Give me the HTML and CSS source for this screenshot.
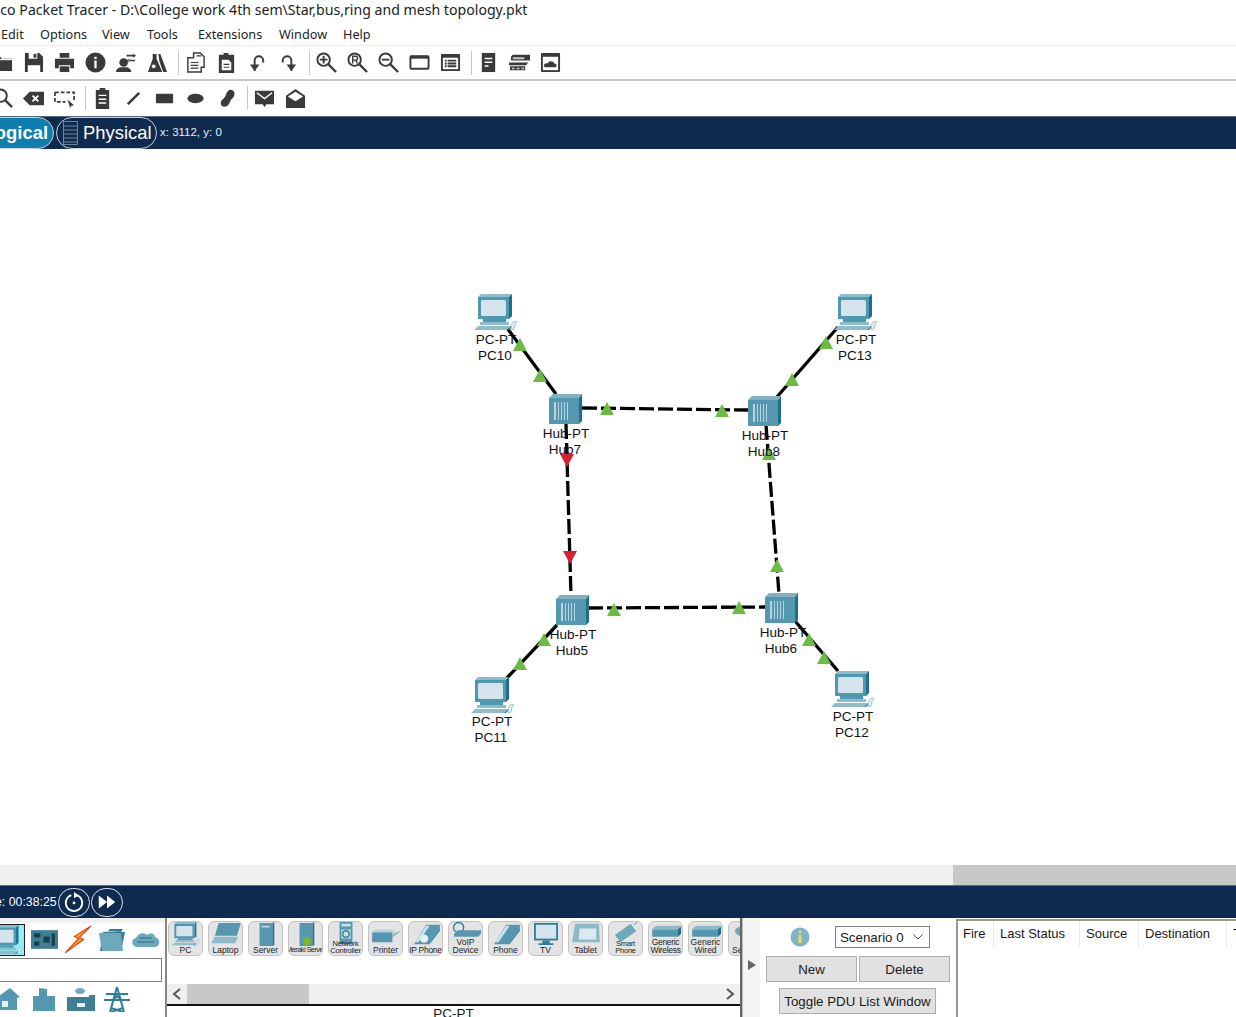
FILE: index.html
```html
<!DOCTYPE html>
<html lang="en">
<head>
<meta charset="utf-8">
<title>Cisco Packet Tracer</title>
<link rel="stylesheet" href="styles.css">
</head>
<body>
<svg class="defs" width="0" height="0" aria-hidden="true">
  <defs>
    <symbol id="pc" viewBox="0 0 44 37">
      <path d="M4 3l3-3h31l-3 3z" fill="#8dbccb"/>
      <path d="M35 3l3-3v22l-3 3z" fill="#1f6f8c"/>
      <rect x="4" y="3" width="31" height="22" fill="#4f98b1"/>
      <rect x="7" y="6" width="25" height="16" rx="1.500" fill="#d5e4ec"/>
      <path d="M9 25h23v3H9z" fill="#4f98b1"/>
      <path d="M6 28h29v3H6z" fill="#8dbccb"/>
      <path d="M4 32h33l-4 4H0z" fill="#8dbccb"/>
      <path d="M33 36l4-4v2l-2 2z" fill="#2f7f99"/>
      <path d="M38 29c2-2 4-2 5-1l-2 2-1 5-3 1z" fill="#e6eff3" stroke="#7fb4c6" stroke-width=".7"/>
    </symbol>
    <symbol id="hub" viewBox="0 0 33 31">
      <path d="M0 4l4-4h29l-3 4z" fill="#80b0c2"/>
      <path d="M30 4l3-4v27l-3 3z" fill="#1f6f8c"/>
      <rect x="0" y="4" width="30" height="26" fill="#5597af"/>
      <path d="M5 8h2v18H5zM9 8h1v18H9zM12 8h1v18h-1zM15 8h1v18h-1zM18 8h1v18h-1z" fill="#b7d3de"/>
    </symbol>
    <symbol id="tri-up" viewBox="0 0 14 13"><path d="M7 0l7 13H0z" fill="#6cbb45"/></symbol>
    <symbol id="tri-down" viewBox="0 0 14 13"><path d="M0 0h14L7 13z" fill="#d9202f"/></symbol>
  </defs>
</svg>

<header class="title-bar"><span class="title-text">Cisco Packet Tracer - D:\College work 4th sem\Star,bus,ring and mesh topology.pkt</span></header>

<nav class="menu-bar">
  <span class="menu-item menu-edit">Edit</span>
  <span class="menu-item menu-options">Options</span>
  <span class="menu-item menu-view">View</span>
  <span class="menu-item menu-tools">Tools</span>
  <span class="menu-item menu-ext">Extensions</span>
  <span class="menu-item menu-window">Window</span>
  <span class="menu-item menu-help">Help</span>
</nav>

<div class="toolbar toolbar-main">
  <span class="tool"><svg viewBox="0 0 22 22"><path d="M0 4h8l2 3h11v13H0z"/><path d="M0 8h21" stroke="#fff" stroke-width="1.2"/></svg></span>
  <span class="tool"><svg viewBox="0 0 22 22"><path d="M2 1h15l4 4v16H2z"/><path d="M6 1h9v6H6zM5 14h13v7H5z" fill="#fff"/><path d="M11 2h3v4h-3z"/></svg></span>
  <span class="tool"><svg viewBox="0 0 22 22"><path d="M6 1h10v5H6zM1 7h20v10h-4v-3H5v3H1z"/><path d="M6 15h10v6H6z"/></svg></span>
  <span class="tool"><svg viewBox="0 0 22 22"><circle cx="11" cy="11" r="10.5"/><path d="M9.8 5h2.4v2.4H9.800zM9.800 9h2.400v8H9.800z" fill="#fff"/></svg></span>
  <span class="tool"><svg viewBox="0 0 22 22"><circle cx="8" cy="11" r="4.500"/><path d="M0 21c0-3 3-5 6-5h4c3 0 6 2 6 5zM11 3h7v1.600h-7zM18 1.500l3 2.300-3 2.300zM13 8h7v1.600h-7zM14 6.500l-3 2.300 3 2.300z"/></svg></span>
  <span class="tool"><svg viewBox="0 0 22 22"><path d="M6 2h4v5l6 14H1L6 7zM12 2h2l7 19h-4l-4-11z"/><circle cx="7" cy="15" r="2" fill="#fff"/></svg></span>
  <span class="tool-sep"></span>
  <span class="tool"><svg viewBox="0 0 22 22"><path d="M9 1h7l4 4v11h-3v5H3V6h6z" fill="#fff" stroke="#3a3a3a" stroke-width="1.500"/><path d="M6 11h8M6 14h8M6 17h8M12 4h5" stroke="#3a3a3a" stroke-width="1.300"/></svg></span>
  <span class="tool"><svg viewBox="0 0 22 22"><path d="M3 3h5V1h5v2h6v19H3z"/><path d="M6 8h7l3 3v8H6z" fill="#fff"/><path d="M8 13h6M8 16h6" stroke="#3a3a3a" stroke-width="1.200"/></svg></span>
  <span class="tool"><svg viewBox="0 0 22 22"><path d="M8 20v-11c0-6 9-6 9 0v2" fill="none" stroke="#3a3a3a" stroke-width="2"/><path d="M3 11h10l-5 7z" transform="translate(0 2)"/></svg></span>
  <span class="tool"><svg viewBox="0 0 22 22"><path d="M14 20v-11c0-6-9-6-9 0v2" fill="none" stroke="#3a3a3a" stroke-width="2"/><path d="M9 13h10l-5 7z"/></svg></span>
  <span class="tool-sep"></span>
  <span class="tool"><svg viewBox="0 0 22 22"><circle cx="8" cy="8" r="6.500" fill="none" stroke="#3a3a3a" stroke-width="2"/><path d="M13 13l8 8" stroke="#3a3a3a" stroke-width="2.400"/><path d="M4 8h8M8 4v8" stroke="#3a3a3a" stroke-width="2"/></svg></span>
  <span class="tool"><svg viewBox="0 0 22 22"><circle cx="8" cy="8" r="6.500" fill="none" stroke="#3a3a3a" stroke-width="2"/><path d="M13 13l8 8" stroke="#3a3a3a" stroke-width="2.400"/><path d="M6 12V4.500h3a2 2 0 0 1 0 4H6M9 8.500l2 3.500" fill="none" stroke="#3a3a3a" stroke-width="1.500"/></svg></span>
  <span class="tool"><svg viewBox="0 0 22 22"><circle cx="8" cy="8" r="6.500" fill="none" stroke="#3a3a3a" stroke-width="2"/><path d="M13 13l8 8" stroke="#3a3a3a" stroke-width="2.400"/><path d="M4 8h8" stroke="#3a3a3a" stroke-width="2"/></svg></span>
  <span class="tool"><svg viewBox="0 0 22 22"><rect x="1.500" y="4.500" width="19" height="13" rx="1" fill="none" stroke="#3a3a3a" stroke-width="2"/><path d="M1 4h20v3H1z"/></svg></span>
  <span class="tool"><svg viewBox="0 0 22 22"><rect x="1" y="2" width="20" height="18" rx="1"/><path d="M3 6h16v12H3z" fill="#fff"/><path d="M5 8h2v2H5zM8 8h9v2H8zM5 11h2v2H5zM8 11h9v2H8zM5 14h2v2H5zM8 14h9v2H8z"/></svg></span>
  <span class="tool-sep"></span>
  <span class="tool"><svg viewBox="0 0 22 22"><path d="M4 1h14v20H4z"/><path d="M7 6h8v1.500H7zM7 10h8v1.500H7zM7 14h4v1.500H7z" fill="#fff"/></svg></span>
  <span class="tool"><svg viewBox="0 0 22 22"><path d="M2 5l2-2h18v6H2zM0 11h20l-2 3H0zM1 15h16v4H1z"/><path d="M4 5.500h12v2H4zM3 16.500h3v1.500H3zM8 16.500h3v1.500H8zM13 16.500h3v1.500h-3z" fill="#c9c9c9"/></svg></span>
  <span class="tool"><svg viewBox="0 0 22 22"><rect x="1" y="1" width="20" height="20" rx="1"/><path d="M3 5h16v14H3z" fill="#fff"/><path d="M5 16c-2-2 0-5 3-4 1-3 6-3 7 0 3 0 3 4 1 4z"/></svg></span>
</div>

<div class="toolbar toolbar-draw">
  <span class="tool"><svg viewBox="0 0 22 22"><circle cx="9" cy="8" r="6.500" fill="none" stroke="#3a3a3a" stroke-width="2"/><path d="M14 13l7 7" stroke="#3a3a3a" stroke-width="2.400"/></svg></span>
  <span class="tool"><svg viewBox="0 0 22 22"><path d="M7 4h15v14H7L0 11z"/><path d="M10 8l6 6M16 8l-6 6" stroke="#fff" stroke-width="2"/></svg></span>
  <span class="tool"><svg viewBox="0 0 22 22"><path d="M1 4.500h20v8M1 4.500v10h11" fill="none" stroke="#3a3a3a" stroke-width="1.800" stroke-dasharray="4 2"/><path d="M14 12l7 6-3 .5-1 2.500z"/></svg></span>
  <span class="tool-sep"></span>
  <span class="tool"><svg viewBox="0 0 22 22"><path d="M4 2h4V0h6v2h4v20H4z"/><path d="M7 7h8v1.500H7zM7 11h8v1.500H7zM7 15h8v1.500H7z" fill="#fff"/></svg></span>
  <span class="tool"><svg viewBox="0 0 22 22"><path d="M5 17L17 5" stroke="#3a3a3a" stroke-width="2.600"/></svg></span>
  <span class="tool"><svg viewBox="0 0 22 22"><rect x="2" y="6" width="18" height="10" rx="1"/></svg></span>
  <span class="tool"><svg viewBox="0 0 22 22"><ellipse cx="11" cy="11" rx="8.500" ry="5"/></svg></span>
  <span class="tool"><svg viewBox="0 0 22 22"><path d="M14 2c5-1 7 4 4 8-2 2-3 3-4 6-2 5-9 5-9 0 0-4 4-5 5-8 1-3 2-5 4-6z"/></svg></span>
  <span class="tool-sep"></span>
  <span class="tool"><svg viewBox="0 0 22 22"><path d="M1 3h20v14h-8l-2 3-2-3H1z"/><path d="M3 5l8 6 8-6" fill="none" stroke="#fff" stroke-width="1.500"/></svg></span>
  <span class="tool"><svg viewBox="0 0 22 22"><path d="M1 8l10-7 10 7v13H1z"/><path d="M3 9l8 5 8-5-8-5z" fill="#fff"/></svg></span>
</div>

<div class="mode-bar">
  <span class="mode-tab mode-logical">Logical</span>
  <span class="mode-tab mode-physical">
    <svg class="mode-icon" viewBox="0 0 15 24"><path d="M.5.500h14v23H.5zM.5 5h14M.5 9h14M.5 13h14M.5 17h14M.5 21h14" fill="none" stroke="#6f8499"/></svg>
    Physical
  </span>
  <span class="coords">x: 3112, y: 0</span>
</div>

<main class="canvas">
  <svg class="diagram" viewBox="0 149 1236 716" width="1236" height="716">
    <g class="link">
      <path d="M507 328L556 394"/>
      <path d="M776 398L838 327"/>
      <path d="M557 625L505 680"/>
      <path d="M795 621L838 671"/>
    </g>
    <g class="link link-dashed">
      <path d="M582 408L748 410"/>
      <path d="M566 424L571 596"/>
      <path d="M766 425L779 594"/>
      <path d="M588 608L765 607"/>
    </g>
    <use href="#pc" x="474" y="294" width="44" height="37"/>
    <use href="#pc" x="834" y="294" width="44" height="37"/>
    <use href="#pc" x="471" y="677" width="44" height="37"/>
    <use href="#pc" x="831" y="671" width="44" height="37"/>
    <use href="#hub" x="549" y="394" width="33" height="31"/>
    <use href="#hub" x="748" y="396" width="33" height="31"/>
    <use href="#hub" x="556" y="595" width="33" height="31"/>
    <use href="#hub" x="765" y="593" width="33" height="31"/>
    <use href="#tri-up" x="513" y="338" width="14" height="13"/>
    <use href="#tri-up" x="533" y="369" width="14" height="13"/>
    <use href="#tri-up" x="600" y="402" width="14" height="13"/>
    <use href="#tri-up" x="715" y="404" width="14" height="13"/>
    <use href="#tri-up" x="785" y="373" width="14" height="13"/>
    <use href="#tri-up" x="819" y="336" width="14" height="13"/>
    <use href="#tri-up" x="762" y="447" width="14" height="13"/>
    <use href="#tri-up" x="770" y="559" width="14" height="13"/>
    <use href="#tri-up" x="607" y="603" width="14" height="13"/>
    <use href="#tri-up" x="732" y="601" width="14" height="13"/>
    <use href="#tri-up" x="537" y="633" width="14" height="13"/>
    <use href="#tri-up" x="513" y="657" width="14" height="13"/>
    <use href="#tri-up" x="802" y="633" width="14" height="13"/>
    <use href="#tri-up" x="817" y="651" width="14" height="13"/>
    <use href="#tri-down" x="560" y="454" width="14" height="13"/>
    <use href="#tri-down" x="563" y="551" width="14" height="13"/>
    <g class="node-label">
      <text x="496" y="344">PC-PT</text><text x="495" y="360">PC10</text>
      <text x="856" y="344">PC-PT</text><text x="855" y="360">PC13</text>
      <text x="492" y="726">PC-PT</text><text x="491" y="742">PC11</text>
      <text x="853" y="721">PC-PT</text><text x="852" y="737">PC12</text>
      <text x="566" y="438">Hub-PT</text><text x="565" y="454">Hub7</text>
      <text x="765" y="440">Hub-PT</text><text x="764" y="456">Hub8</text>
      <text x="573" y="639">Hub-PT</text><text x="572" y="655">Hub5</text>
      <text x="783" y="637">Hub-PT</text><text x="781" y="653">Hub6</text>
    </g>
  </svg>
</main>

<div class="h-scroll"><span class="h-thumb"></span></div>

<div class="sim-bar">
  <span class="sim-time">Time: 00:38:25</span>
  <span class="round-btn"><svg viewBox="0 0 24 24"><path d="M9 4.500a9 9 0 1 0 6 0" fill="none" stroke="#fff" stroke-width="2"/><path d="M12 1l5 4-5 3z" fill="#fff"/><circle cx="12" cy="13" r="1.500" fill="#fff"/></svg></span>
  <span class="round-btn"><svg viewBox="0 0 24 24"><path d="M3 5l9 7-9 7zM12 5l9 7-9 7z" fill="#fff"/></svg></span>
</div>

<section class="bottom">
  <div class="cat-panel">
    <div class="cat-row">
      <span class="cat-selected"><svg viewBox="0 0 44 37"><use href="#pc"/></svg></span>
      <svg class="cat-board" viewBox="0 0 26 18"><rect width="26" height="18" fill="#3f7f95"/><path d="M3 3h6v4H3zM12 6h6v6h-6zM20 3h3v12h-3zM3 11h5v4H3z" fill="#173f4f"/></svg>
      <svg class="cat-bolt" viewBox="0 0 26 26"><path d="M25 0L9 10l4 2L0 26l18-13-4-2z" fill="#f6a11a" stroke="#e23b1d" stroke-width="1"/></svg>
      <svg class="cat-folder" viewBox="0 0 27 22"><path d="M1 2h8l2-2h13l-2 3H4l-3 19h21l4-19" fill="#2f7f99"/><path d="M0 4h22l2 18H3z" fill="#6ea8bb"/></svg>
      <svg class="cat-cloud" viewBox="0 0 28 18"><path d="M4 16C-1 14-1 8 4 7c2-5 8-6 11-3 4-3 8-1 8 2 5 1 6 8 1 10z" fill="#6ea8bb"/><path d="M7 7h13M5 11h17" stroke="#3f7f95" stroke-width="1.500"/></svg>
    </div>
    <div class="cat-search"></div>
    <div class="cat-row cat-row-lower">
      <svg class="sub-home" viewBox="0 0 25 23"><path d="M0 10L14 0l10 9-3 1v12H0z" fill="#5597af"/><path d="M6 13h6v6H6z" fill="#e6f0f4"/></svg>
      <svg class="sub-building" viewBox="0 0 22 23"><path d="M6 0l8 1v22H6zM0 8h6v15H0zM14 8h8v15h-8z" fill="#5597af"/></svg>
      <svg class="sub-corp" viewBox="0 0 28 23"><ellipse cx="13" cy="3" rx="5" ry="3" fill="#6ea8bb"/><path d="M0 9h22V7h6v16H0z" fill="#3f7f95"/><path d="M10 15h8v4h-8z" fill="#e6f0f4"/></svg>
      <svg class="sub-tower" viewBox="0 0 26 26"><path d="M13 1l7 25M13 1L6 26M2 8h22M0 14h26M9 8l9 6M17 8l-9 6M7 22l12 4M19 22L7 26" fill="none" stroke="#2f7f99" stroke-width="2"/></svg>
    </div>
  </div>

  <div class="dev-panel">
    <div class="dev-tiles">
      <div class="tile"><svg viewBox="0 0 32 26"><use href="#pc" width="32" height="26"/></svg><span class="tile-label">PC</span></div>
      <div class="tile"><svg viewBox="0 0 32 26"><path d="M8 1h24l-4 14H4z" fill="#5597af"/><path d="M4 16h25l-3 7H0z" fill="#8db9c8"/></svg><span class="tile-label">Laptop</span></div>
      <div class="tile"><svg viewBox="0 0 32 26"><path d="M9 1h14v25H9z" fill="#5597af"/><path d="M23 1l2-1v25l-2 1z" fill="#1f6f8c"/><path d="M11 4h9v2h-9z" fill="#b7d3de"/></svg><span class="tile-label">Server</span></div>
      <div class="tile"><svg viewBox="0 0 32 26"><path d="M9 1h14v25H9z" fill="#5597af"/><path d="M23 1l2-1v25l-2 1z" fill="#1f6f8c"/><circle cx="17" cy="21" r="4.500" fill="#77b82e"/></svg><span class="tile-label tile-tiny">Meraki Server</span></div>
      <div class="tile"><svg viewBox="0 0 32 26"><path d="M9 0h14v24H9z" fill="#5597af"/><path d="M11 2h10v3H11zM11 8h10v10H11z" fill="#c9dfe8"/><circle cx="16" cy="13" r="3.500" fill="none" stroke="#2f7f99" stroke-width="1.500"/></svg><span class="tile-label tile-small">Network<br>Controller</span></div>
      <div class="tile"><svg viewBox="0 0 32 26"><path d="M1 11h22v11H1z" fill="#5597af"/><path d="M4 8h19l3 3H1z" fill="#b7d3de"/><path d="M23 13l10-4-10 8z" fill="#8db9c8"/></svg><span class="tile-label">Printer</span></div>
      <div class="tile"><svg viewBox="0 0 32 26"><path d="M3 24L16 3h15v7L20 24z" fill="#5597af"/><path d="M4 22L16 4h4L8 22z" fill="#c9dfe8"/><circle cx="14" cy="18" r="4.500" fill="#e6f0f4"/></svg><span class="tile-label tile-tight">IP Phone</span></div>
      <div class="tile"><svg viewBox="0 0 32 26"><circle cx="8" cy="6" r="5.500" fill="none" stroke="#2f7f99" stroke-width="1.500"/><path d="M3 13L7 9h26v3l-4 4H3z" fill="#5597af"/></svg><span class="tile-label">VoIP<br>Device</span></div>
      <div class="tile"><svg viewBox="0 0 32 26"><path d="M3 24L16 3h15v7L20 24z" fill="#5597af"/><path d="M4 22L16 4h4L8 22z" fill="#c9dfe8"/></svg><span class="tile-label">Phone</span></div>
      <div class="tile"><svg viewBox="0 0 32 26"><rect x="3" y="1" width="26" height="19" fill="#2f7f99"/><rect x="5" y="3" width="22" height="15" fill="#d5e4ec"/><path d="M12 20h8v3h4v2H8v-2h4z" fill="#2f7f99"/></svg><span class="tile-label">TV</span></div>
      <div class="tile"><svg viewBox="0 0 32 26"><path d="M4 2h26l1 20H1z" fill="#8db9c8"/><path d="M9 7h18v12H8z" fill="#dceaf0"/></svg><span class="tile-label">Tablet</span></div>
      <div class="tile"><svg viewBox="0 0 32 26"><path d="M4 14L21 2l6 8-17 12z" fill="#6ea8bb"/><path d="M25 3l3-3" stroke="#5597af"/></svg><span class="tile-label tile-small">Smart<br>Phone</span></div>
      <div class="tile"><svg viewBox="0 0 32 26"><path d="M1 8l4-4h28l-4 4z" fill="#8db9c8"/><path d="M1 8h28v8H1z" fill="#5597af"/><path d="M29 8l4-4v8l-4 4z" fill="#1f6f8c"/></svg><span class="tile-label tile-tight">Generic<br>Wireless</span></div>
      <div class="tile"><svg viewBox="0 0 32 26"><path d="M1 8l4-4h28l-4 4z" fill="#8db9c8"/><path d="M1 8h28v8H1z" fill="#5597af"/><path d="M29 8l4-4v8l-4 4z" fill="#1f6f8c"/></svg><span class="tile-label">Generic<br>Wired</span></div>
      <div class="tile"><svg viewBox="0 0 32 26"><ellipse cx="16" cy="10" rx="12" ry="6" fill="#6ea8bb"/></svg><span class="tile-label">Sensor</span></div>
    </div>
    <div class="dev-scroll">
      <svg class="dev-arrow" viewBox="0 0 10 12"><path d="M8 1L2 6l6 5" fill="none" stroke="#555" stroke-width="2"/></svg>
      <span class="dev-thumb"></span>
      <svg class="dev-arrow dev-arrow-right" viewBox="0 0 10 12"><path d="M2 1l6 5-6 5" fill="none" stroke="#555" stroke-width="2"/></svg>
    </div>
    <div class="dev-name">PC-PT</div>
  </div>

  <div class="splitter"><svg class="split-arrow" viewBox="0 0 8 10"><path d="M0 0l8 5-8 5z" fill="#666"/></svg></div>

  <div class="scenario">
    <div class="sc-top">
      <svg class="sc-info" viewBox="0 0 20 20"><circle cx="10" cy="10" r="9.500" fill="#7fb2c6"/><path d="M8.500 4h3v2.500h-3zM8.500 8h3v8h-3z" fill="#e8e04a"/></svg>
      <span class="sc-select">Scenario 0<svg class="sc-caret" viewBox="0 0 10 6"><path d="M.5.500L5 5 9.500.500" fill="none" stroke="#555"/></svg></span>
    </div>
    <div class="sc-buttons">
      <span class="btn">New</span>
      <span class="btn">Delete</span>
    </div>
    <span class="btn btn-toggle">Toggle PDU List Window</span>
  </div>

  <div class="pdu-table">
    <span class="pdu-head pdu-fire">Fire</span>
    <span class="pdu-head pdu-status">Last Status</span>
    <span class="pdu-head pdu-source">Source</span>
    <span class="pdu-head pdu-dest">Destination</span>
    <span class="pdu-head pdu-type">Type</span>
  </div>
</section>
</body>
</html>
```
FILE: styles.css
```css
* { box-sizing: border-box; }
html, body { margin: 0; height: 1017px; overflow: hidden; background: #fff; }
body { width: 1236px; font-family: "Liberation Sans", Arial, sans-serif; color: #1a1a1a; }
.defs { display: block; height: 0; }

.title-bar { height: 20px; overflow: hidden; font-family: "Noto Sans", sans-serif; font-size: 14.130px; line-height: 20px; white-space: nowrap; color: #222; }
.title-text { display: block; margin-left: -19px; }

.menu-bar { height: 26px; display: flex; align-items: center; font-family: "Noto Sans", sans-serif; font-size: 12.700px; border-bottom: 1px solid #eee; padding-top: 3px; color: #222; }
.menu-item { flex: none; }
.menu-edit { margin-left: 1px; width: 39px; }
.menu-options { width: 62px; }
.menu-view { width: 45px; }
.menu-tools { width: 51px; }
.menu-ext { width: 81px; }
.menu-window { width: 64px; }

.toolbar { height: 35px; display: flex; align-items: center; margin-left: -13px; width: 1249px; }
.toolbar-main { border-bottom: 2px solid #c8c8c8; }
.toolbar-draw { height: 35px; padding-bottom: 1px; }
.tool { flex: none; width: 31px; height: 24px; display: flex; align-items: center; justify-content: center; }
.tool svg { width: 21px; height: 21px; fill: #3a3a3a; }
.tool-sep { flex: none; width: 7px; height: 24px; position: relative; }
.tool-sep::after { content: ""; position: absolute; left: 5px; top: 0; bottom: 0; width: 1px; background: #c8c8c8; }

.mode-bar { height: 33px; background: #0e2a4f; border-top: 1px solid #5a6a7c; display: flex; align-items: center; margin-left: -16px; width: 1252px; color: #fff; }
.mode-tab { height: 32px; border-radius: 16px; border: 1px solid #c4d0da; display: flex; align-items: center; font-size: 18.400px; flex: none; }
.mode-logical { width: 70px; background: #0e7eae; font-weight: 700; justify-content: flex-end; padding-right: 5px; overflow: hidden; }
.mode-physical { width: 101px; margin-left: 2px; background: #0e2a4f; padding-left: 6px; gap: 5px; }
.mode-icon { width: 15px; height: 24px; flex: none; }
.coords { font-size: 11.500px; margin-left: 3px; padding-bottom: 2px; color: #e8eef4; }

.canvas { height: 716px; background: #fff; }
.diagram { display: block; }
.link path { fill: none; stroke: #000; stroke-width: 3.300; }
.link-dashed path { stroke-dasharray: 15 4; }
.node-label text { font-size: 13.500px; text-anchor: middle; fill: #111; }

.h-scroll { height: 20px; background: #f0f0f0; display: flex; justify-content: flex-end; }
.h-thumb { width: 283px; background: #c8c8c8; }

.sim-bar { height: 33px; background: #0e2a4f; border-top: 1px solid #5a6a7c; display: flex; align-items: center; margin-left: -25px; width: 1261px; color: #fff; }
.sim-time { font-size: 12.300px; width: 83px; flex: none; white-space: nowrap; }
.round-btn { width: 32px; height: 29px; margin-right: 1px; border: 1px solid #dfe6ec; border-radius: 15px; display: flex; align-items: center; justify-content: center; flex: none; }
.round-btn svg { width: 22px; height: 22px; }

.bottom { height: 99px; display: flex; overflow: hidden; }

.cat-panel { flex: none; width: 165px; position: relative; overflow: hidden; border-top: 5px solid #f0f0f0; }
.cat-row { display: flex; align-items: center; height: 33px; }
.cat-selected { flex: none; width: 39px; height: 32px; margin-left: -14px; background: #8ff0f5; border: 1px solid #222; display: flex; justify-content: flex-end; align-items: center; }
.cat-selected svg { width: 38px; height: 30px; }
.cat-board { width: 27px; height: 19px; margin-left: 6px; flex: none; }
.cat-bolt { width: 27px; height: 27px; margin-left: 7px; flex: none; }
.cat-folder { width: 27px; height: 22px; margin-left: 7px; flex: none; }
.cat-cloud { width: 28px; height: 18px; margin-left: 6px; flex: none; }
.cat-search { height: 24px; width: 170px; margin: 2px 0 0 -8px; border: 1px solid #808080; }
.cat-row-lower { height: 30px; padding-top: 4px; }
.sub-home { width: 25px; height: 23px; margin-left: -4px; flex: none; }
.sub-building { width: 22px; height: 23px; margin-left: 12px; flex: none; }
.sub-corp { width: 28px; height: 23px; margin-left: 12px; flex: none; }
.sub-tower { width: 26px; height: 26px; margin-left: 9px; flex: none; }

.dev-panel { flex: none; width: 577px; border-left: 2px solid #888; border-right: 2px solid #666; overflow: hidden; display: flex; flex-direction: column; }
.dev-tiles { flex: none; height: 66px; display: flex; gap: 5px; padding: 3px 0 0 1px; overflow: hidden; }
.tile { flex: none; width: 35px; height: 35px; background: #e4e4e4; border: 1.500px solid #c2c2c2; border-radius: 6px; display: flex; flex-direction: column; align-items: center; position: relative; overflow: hidden; }
.tile svg { width: 30px; height: 24px; flex: none; }
.tile-label { position: absolute; left: -6px; right: -6px; bottom: 1px; text-align: center; font-size: 8.500px; line-height: 8px; color: #222; white-space: nowrap; }
.tile-tight { letter-spacing: -.3px; }
.tile-tiny { font-size: 7.500px; letter-spacing: -.6px; }
.tile-small { font-size: 7.500px; line-height: 7px; letter-spacing: -.2px; }
.dev-scroll { height: 20px; background: #f0f0f0; flex: none; display: flex; align-items: center; padding-left: 5px; position: relative; }
.dev-arrow { width: 10px; height: 12px; flex: none; }
.dev-thumb { width: 122px; height: 20px; margin-left: 5px; background: #c8c8c8; flex: none; }
.dev-arrow-right { position: absolute; right: 5px; }
.dev-name { flex: 1; border-top: 2px solid #111; text-align: center; font-size: 13.500px; line-height: 14px; padding-top: 1px; }

.splitter { flex: none; width: 18px; background: #f4f4f4; border-left: 1px solid #bbb; display: flex; align-items: center; justify-content: center; padding-bottom: 6px; }
.split-arrow { width: 8px; height: 10px; }

.scenario { flex: none; width: 197px; padding-top: 8px; display: flex; flex-direction: column; font-size: 13.300px; }
.sc-top { width: 100%; height: 22px; display: flex; align-items: center; }
.sc-info { width: 20px; height: 20px; margin-left: 30px; flex: none; }
.sc-select { width: 95px; height: 22px; margin-left: 25px; border: 1px solid #808080; display: flex; align-items: center; padding-left: 4px; gap: 9px; white-space: nowrap; }
.sc-caret { width: 10px; height: 6px; }
.sc-buttons { display: flex; gap: 2px; margin: 8px 0 0 6px; }
.btn { display: flex; align-items: center; justify-content: center; width: 91px; height: 26px; background: #e1e1e1; border: 1px solid #adadad; }
.btn-toggle { width: 157px; margin: 6px 0 0 19px; white-space: nowrap; }

.pdu-table { flex: 1; display: flex; border-left: 2px solid #999; border-top: 2px solid #999; margin: 1px 0 0 -1px; font-size: 13px; align-items: flex-start; overflow: hidden; }
.pdu-head { flex: none; height: 26px; line-height: 26px; padding-left: 6px; border-right: 1px solid #e8e8e8; white-space: nowrap; }
.pdu-fire { width: 36px; padding-left: 5px; }
.pdu-status { width: 86px; }
.pdu-source { width: 59px; }
.pdu-dest { width: 88px; }
.pdu-type { width: 40px; border-right: 0; }
```
